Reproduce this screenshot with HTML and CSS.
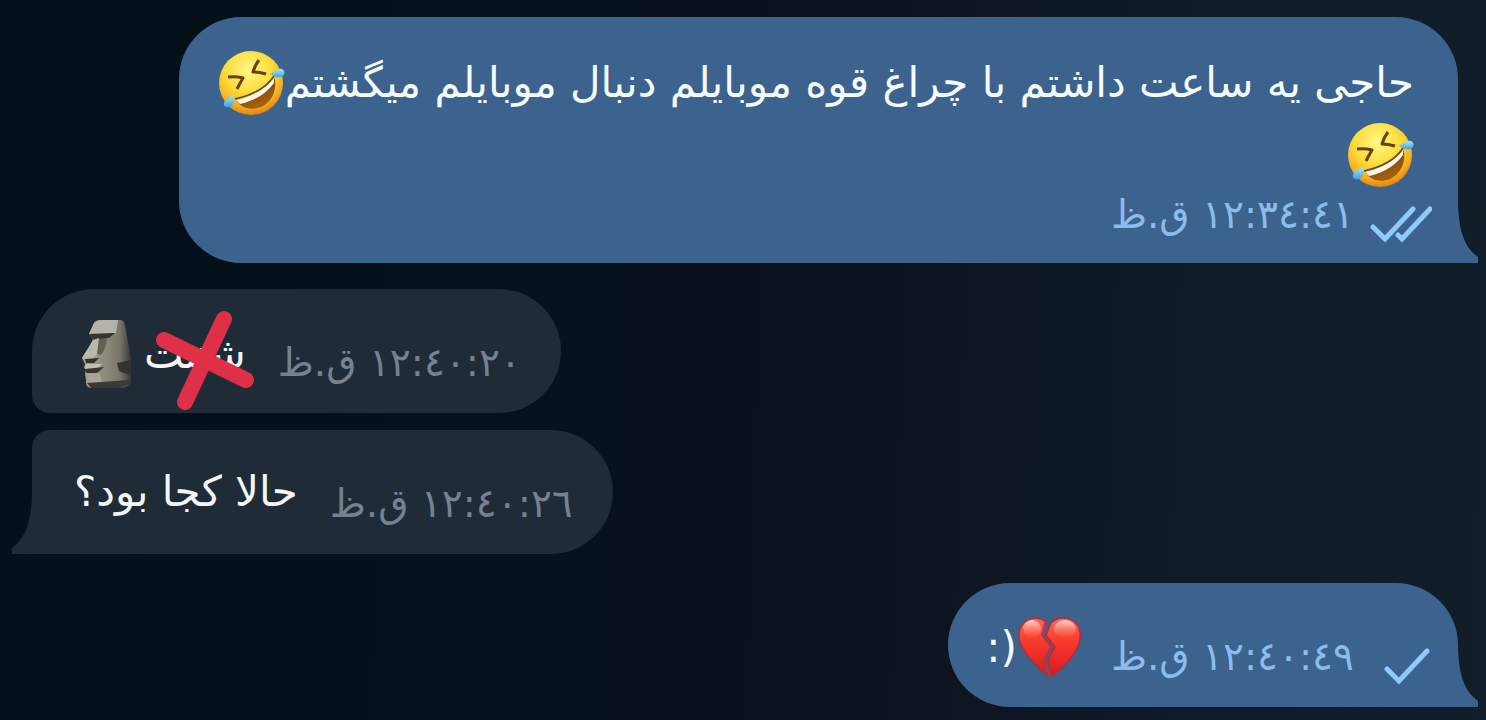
FILE: index.html
```
<!DOCTYPE html>
<html lang="fa">
<head>
<meta charset="utf-8">
<meta name="viewport" content="width=device-width, initial-scale=1">
<title>گفتگو</title>
<link rel="stylesheet" href="styles.css">
</head>
<body>
<svg class="defs" width="0" height="0" aria-hidden="true">
  <defs>
    <radialGradient id="face" cx="0.46" cy="0.3" r="0.72">
      <stop offset="0" stop-color="#fff88a"/><stop offset="0.5" stop-color="#fcdc38"/><stop offset="0.8" stop-color="#f5ad22"/><stop offset="1" stop-color="#dc7d12"/>
    </radialGradient>
    <linearGradient id="mouth" x1="0" y1="0" x2="0.5" y2="1">
      <stop offset="0" stop-color="#63330c"/><stop offset="1" stop-color="#a8620f"/>
    </linearGradient>
    <linearGradient id="tear" x1="0" y1="0" x2="0" y2="1">
      <stop offset="0" stop-color="#a4e6fa"/><stop offset="1" stop-color="#3aa5d8"/>
    </linearGradient>
    <linearGradient id="heart" x1="0" y1="0" x2="0" y2="1">
      <stop offset="0" stop-color="#fa6a58"/><stop offset="0.4" stop-color="#f93a2e"/><stop offset="1" stop-color="#d81a20"/>
    </linearGradient>
    <linearGradient id="shine" x1="0" y1="0" x2="0" y2="1">
      <stop offset="0" stop-color="#ffe2d8" stop-opacity="0.9"/><stop offset="1" stop-color="#ff8070" stop-opacity="0"/>
    </linearGradient>
    <linearGradient id="stone" x1="0" y1="0" x2="1" y2="0">
      <stop offset="0" stop-color="#a6a394"/><stop offset="0.5" stop-color="#8d897a"/><stop offset="0.78" stop-color="#77746a"/><stop offset="1" stop-color="#393938"/>
    </linearGradient>
    <symbol id="rofl" viewBox="0 0 66 66">
      <circle cx="32" cy="33" r="32" fill="url(#face)"/>
      <path d="M17 50C34 46 48 38 55 27C59 39 53 52 42 57C32 61 22 58 17 50Z" fill="url(#mouth)"/>
      <path d="M17 50C34 46 48 38 55 27L55 33C47 44 35 51 21 54Z" fill="#fff8e8"/>
      <path d="M16 49C34 45 48 37 55 26" fill="none" stroke="#684010" stroke-width="1.5"/>
      <path d="M9 27Q17 26 24 28Q21 33 18 39" fill="none" stroke="#683f0d" stroke-width="3" stroke-linejoin="round"/>
      <path d="M40 10Q36 15 34 22Q40 22 47 24" fill="none" stroke="#683f0d" stroke-width="3" stroke-linejoin="round"/>
      <path d="M51 24C56 21 60 18 63 19C67 21 66 26 62 27C58 28 55 26 51 24Z" fill="url(#tear)"/>
      <path d="M15 45C16 50 15 55 11 57C7 58 4 56 5 53C6 49 11 47 15 45Z" fill="url(#tear)"/>
    </symbol>
    <symbol id="tail" viewBox="0 0 20 64">
      <path d="M0 0C0 30 6 48 20 58V64H0Z" fill="currentColor"/>
    </symbol>
  </defs>
</svg>

<main class="chat">
  <article class="bubble out long">
    <div class="text">
      <p class="line">حاجی یه ساعت داشتم با چراغ قوه موبایلم دنبال موبایلم میگشتم<svg class="emoji" role="img" aria-label="خنده"><use href="#rofl"/></svg></p>
      <p class="line"><svg class="emoji" role="img" aria-label="خنده"><use href="#rofl"/></svg></p>
    </div>
    <div class="meta">
      <svg class="tick" viewBox="0 0 62 40" role="img" aria-label="خوانده شد"><path d="M3 22L15 34L43 4M28 30L32 34L60 4" fill="none" stroke="currentColor" stroke-width="5" stroke-linecap="round"/></svg>
      <time>١٢:٣٤:٤١ ق.ظ</time>
    </div>
    <svg class="tail" aria-hidden="true"><use href="#tail"/></svg>
  </article>

  <article class="bubble in first">
    <div class="meta"><time>١٢:٤٠:٢٠ ق.ظ</time></div>
    <p class="line"><span class="struck">شتتت<svg class="cross" viewBox="0 0 100 100" aria-hidden="true"><path d="M9 30L91 70M69 9L30 92" fill="none" stroke="#df3048" stroke-width="16" stroke-linecap="round"/></svg></span><svg class="moai" viewBox="0 0 50 70" role="img" aria-label="مجسمه">
      <path d="M12 4Q14 1 20 1H38Q42 1 43 6L49 40V63Q47 68 39 69H9Q3 68 4 61L3 54Q5 51 2 49L3 45L0 39L9 26L11 20L7 15Z" fill="url(#stone)"/>
      <path d="M12 4Q14 1 20 1H36L34 14L7 15Z" fill="#b5b3a5"/>
      <path d="M7 15L33 14L27 19L12 21Z" fill="#35352f"/>
      <path d="M11 21L17 19L15 36L8 42L0 39Z" fill="#bbb8a8"/>
      <path d="M17 20L25 19Q24 30 19 36L15 35Z" fill="#646154"/>
      <path d="M3 40L17 39L12 44H4Z" fill="#33322d"/>
      <path d="M4 45H20L15 50H3Z" fill="#c2bfac"/>
      <path d="M3 50L22 48L15 54L4 54Z" fill="#37362f"/>
      <path d="M5 55L17 54L20 63L9 65Z" fill="#aaa697"/>
      <path d="M35 44L49 41V57L37 52Z" fill="#34332f"/>
      <path d="M5 64L48 61L47 65L39 69H9Z" fill="#3a3933"/>
    </svg></p>
  </article>

  <article class="bubble in last">
    <div class="meta"><time>١٢:٤٠:٢٦ ق.ظ</time></div>
    <p class="line">حالا کجا بود؟</p>
    <svg class="tail" aria-hidden="true"><use href="#tail"/></svg>
  </article>

  <article class="bubble out short">
    <div class="meta">
      <svg class="tick single" viewBox="0 0 46 40" role="img" aria-label="ارسال شد"><path d="M3 22L15 34L43 4" fill="none" stroke="currentColor" stroke-width="5" stroke-linecap="round"/></svg>
      <time>١٢:٤٠:٤٩ ق.ظ</time>
    </div>
    <p class="line"><svg class="emoji" viewBox="0 0 66 66" role="img" aria-label="قلب شکسته">
      <path d="M29 7C21 0 7 3 3 14C-2 30 13 45 31 61L27 44L34 32L25 20Z" fill="url(#heart)" stroke="#b92b36" stroke-width="1.5"/>
      <path d="M34 8C42 0 57 2 62 13C68 30 51 49 35 61L31 45L38 32L29 20Z" fill="url(#heart)" stroke="#b92b36" stroke-width="1.5"/>
      <path d="M29 7L26 20L35 32L28 44L32 61" fill="none" stroke="#9c3f55" stroke-width="3"/>
      <ellipse cx="15" cy="14" rx="9" ry="9" fill="url(#shine)"/>
      <ellipse cx="48" cy="14" rx="11" ry="9" fill="url(#shine)"/>
    </svg><span>(:</span></p>
    <svg class="tail" aria-hidden="true"><use href="#tail"/></svg>
  </article>
</main>
</body>
</html>
```
FILE: styles.css
```
* { box-sizing: border-box; }

body {
  margin: 0;
  min-height: 100vh;
  background: linear-gradient(92deg, #040f19 0%, #06121b 36%, #0a101b 48%, #0d141f 62%, #0e1a26 78%, #111e2a 100%);
  font-family: "DejaVu Sans", sans-serif;
  font-size: 42px;
}

.defs { position: absolute; }

.chat {
  display: flex;
  flex-direction: column;
  padding: 17px 28px 13px 32px;
}

.bubble {
  position: relative;
  display: flex;
  direction: rtl;
  border-radius: 62px;
  min-height: 124px;
}

.out {
  align-self: flex-end;
  background: #3c628e;
  color: #f6fbff;
  border-bottom-right-radius: 0;
}

.in {
  align-self: flex-start;
  background: #202b38;
  color: #f4f6f8;
  align-items: center;
  gap: 32px;
  padding: 0 40px 0 42px;
}

.long {
  flex-direction: column;
  padding: 30px 44px 18px 40px;
}

.first {
  margin-top: 26px;
  border-bottom-left-radius: 18px;
  padding-left: 50px;
}

.last {
  margin-top: 17px;
  border-top-left-radius: 18px;
  border-bottom-left-radius: 0;
}

.short {
  margin-top: 29px;
  align-items: center;
  gap: 28px;
  padding: 0 28px 0 38px;
}

.line {
  display: flex;
  align-items: center;
  margin: 0;
  height: 72px;
  line-height: 68px;
  white-space: nowrap;
}

.first .line, .short .line { padding-top: 6px; }

.emoji { width: 66px; height: 66px; flex: none; overflow: visible; }
.moai { width: 50px; height: 70px; margin-right: 12px; }

.meta {
  display: flex;
  align-items: flex-start;
  gap: 16px;
  font-size: 39px;
  line-height: 48px;
  white-space: nowrap;
}

.out .meta { color: #8bbcec; }
.in .meta { color: #748292; padding-top: 24px; }
.long .meta { margin-right: -18px; }
.short .meta { gap: 30px; padding-top: 30px; }

.tick { width: 62px; height: 40px; color: #8dcbff; margin-top: 14px; }
.single { width: 46px; }

.tail { position: absolute; bottom: 0; width: 20px; height: 64px; }
.out .tail { left: 100%; color: #3c628e; }
.in .tail { right: 100%; color: #202b38; transform: scaleX(-1); }

.struck { position: relative; }
.cross { position: absolute; width: 100px; height: 100px; right: -9px; top: -10px; }
```
